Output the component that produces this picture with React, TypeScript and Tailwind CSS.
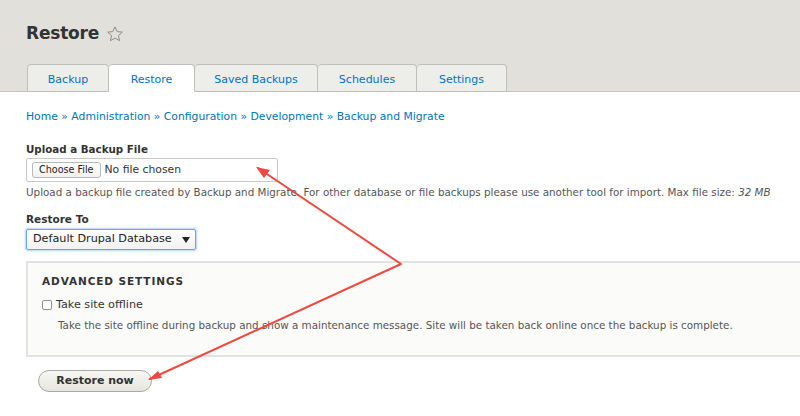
import React from "react";

const tabs = [
  { label: "Backup", w: "w-[82px]", active: false },
  { label: "Restore", w: "w-[86px]", active: true },
  { label: "Saved Backups", w: "w-[123px]", active: false },
  { label: "Schedules", w: "w-[99px]", active: false },
  { label: "Settings", w: "w-[90px]", active: false },
];

export default function App() {
  return (
    <div
      className="relative w-[800px] h-[416px] overflow-hidden bg-white text-[#333]"
      style={{ fontFamily: '"DejaVu Sans", Verdana, sans-serif' }}
    >
      {/* Header */}
      <div className="bg-[#e1e0da] pt-[22px] border-b border-[#c4c4bd]">
        <div className="flex items-center gap-[7px] pl-[26px] h-[22px]">
          <h1 className="text-[17px] leading-[22px] font-bold text-[#333] tracking-[-0.2px]">Restore</h1>
          <svg width="18" height="18" viewBox="0 0 24 24" className="mt-[1px]">
            <path
              d="M12 2.5l2.9 6.3 6.8.7-5.1 4.6 1.5 6.8L12 17.4l-6.1 3.5 1.5-6.8-5.1-4.6 6.8-.7z"
              fill="none"
              stroke="#8e8c80"
              strokeWidth="1.3"
              strokeLinejoin="round"
            />
          </svg>
        </div>
        <div className="flex pl-[27px] mt-[20px] h-[28px] -mb-px">
          {tabs.map((t) => (
            <div
              key={t.label}
              className={`${t.w} h-[28px] flex items-center justify-center pt-[4px] rounded-t-[4px] border border-[#bfbeb8] border-l-0 first:border-l text-[11px] text-[#0074bd] ${
                t.active ? "bg-white border-b-white relative z-10" : "bg-[#ededea]"
              }`}
            >
              {t.label}
            </div>
          ))}
        </div>
      </div>

      {/* Content */}
      <div className="pl-[26px]">
        <div className="mt-[17px] text-[10.8px] leading-[16px] text-[#0074bd]">
          Home » Administration » Configuration » Development » Backup and Migrate
        </div>

        <div className="mt-[17px] text-[10.3px] leading-[14px] font-bold text-[#333]">Upload a Backup File</div>
        <div className="mt-[2px] w-[252px] h-[24px] border border-[#c8c8c8] rounded-[2px] flex items-center pl-[5px] gap-[4px] bg-white">
          <div className="h-[16px] px-[6px] flex items-center rounded-[3px] border border-[#b8b8b8] bg-gradient-to-b from-white to-[#f1f1f1] text-[9.6px] text-[#222]">
            Choose File
          </div>
          <span className="text-[10.8px] text-[#333]">No file chosen</span>
        </div>
        <div className="mt-[3px] text-[10.35px] leading-[14px] text-[#555]">
          Upload a backup file created by Backup and Migrate. For other database or file backups please use another tool for import. Max file size: <em>32 MB</em>
        </div>

        <div className="mt-[13px] text-[10.5px] leading-[14px] font-bold text-[#333]">Restore To</div>
        <div className="mt-[3px] w-[170px] h-[21px] border border-[#6aa6e4] rounded-[2px] shadow-[0_0_2px_1px_rgba(90,150,230,0.45)] bg-gradient-to-b from-white to-[#f1f1f1] flex items-center justify-between pl-[6px] pr-[5px]">
          <span className="text-[11.2px] text-[#222]">Default Drupal Database</span>
          <svg width="8" height="6" viewBox="0 0 8 6">
            <path d="M0 0h8L4 6z" fill="#222" />
          </svg>
        </div>

        <div className="mt-[11px] w-[790px] h-[96px] border-2 border-[#e2e2e0] bg-[#fbfbf9] pl-[14px] pt-[11px]">
          <div className="text-[10.5px] leading-[14px] font-bold tracking-[0.9px] text-[#333]">ADVANCED SETTINGS</div>
          <div className="mt-[10px] flex items-center gap-[4px]">
            <div className="w-[10px] h-[10px] border border-[#8f8f8f] rounded-[2px] bg-white" />
            <span className="text-[11.2px] leading-[14px] text-[#333]">Take site offline</span>
          </div>
          <div className="mt-[6px] pl-[16px] text-[10.35px] leading-[14px] text-[#555]">
            Take the site offline during backup and show a maintenance message. Site will be taken back online once the backup is complete.
          </div>
        </div>

        <div className="mt-[13px] ml-[12px] w-[114px] h-[22px] rounded-full border border-[#a8a8a4] bg-gradient-to-b from-[#f7f7f3] to-[#e6e5e0] flex items-center justify-center text-[11px] font-bold text-[#333]">
          Restore now
        </div>
      </div>

      {/* Annotation arrows */}
      <svg className="absolute inset-0 pointer-events-none" width="800" height="416" viewBox="0 0 800 416">
        <g stroke="#ec4a3f" strokeWidth="2" fill="none" strokeLinecap="round" strokeLinejoin="round">
          <polyline points="258,168 401,264 150,379" />
        </g>
        <polygon points="256,167 270,170 264,178" fill="#ec4a3f" />
        <polygon points="148,380 158,371 162,378" fill="#ec4a3f" />
      </svg>
    </div>
  );
}
